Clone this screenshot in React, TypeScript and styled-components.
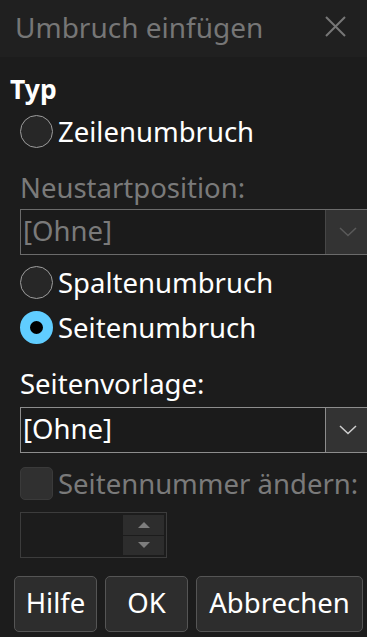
import React from "react";
import styled, { createGlobalStyle } from "styled-components";

const Global = createGlobalStyle`
  html, body {
    margin: 0;
    padding: 0;
    background: #1c1c1c;
    overflow: hidden;
  }
  * { box-sizing: border-box; }
`;

const Window = styled.div`
  width: 367px;
  height: 637px;
  background: #1c1c1c;
  font-family: "Noto Sans", "Open Sans", sans-serif;
  overflow: hidden;
  display: flex;
  flex-direction: column;
`;

const TitleBar = styled.div`
  height: 57px;
  background: #202020;
  display: flex;
  align-items: center;
  justify-content: space-between;
  padding: 0 21px 4px 15px;
  flex-shrink: 0;
`;

const Title = styled.span`
  color: #767676;
  font-size: 28px;
`;

const Body = styled.div`
  display: flex;
  flex-direction: column;
  padding-left: 20px;
`;

const Heading = styled.div`
  margin: 15px 0 0 -10px;
  height: 34px;
  display: flex;
  align-items: center;
  color: #fff;
  font-size: 26.5px;
  font-weight: 700;
`;

const Row = styled.div<{ $top: number; $disabled?: boolean }>`
  margin-top: ${(p) => p.$top}px;
  height: 34px;
  display: flex;
  align-items: center;
  gap: 5px;
  font-size: 27.5px;
  color: ${(p) => (p.$disabled ? "#7a7a7a" : "#ffffff")};
`;

const Radio = styled.span<{ $checked?: boolean }>`
  width: 33px;
  height: 33px;
  border-radius: 50%;
  flex-shrink: 0;
  background: ${(p) => (p.$checked ? "#000" : "#272727")};
  border: ${(p) => (p.$checked ? "10px solid #60cdff" : "1.5px solid #9d9d9d")};
`;

const Check = styled.span`
  width: 33px;
  height: 33px;
  border-radius: 5px;
  flex-shrink: 0;
  background: #303030;
  border: 1px solid #3a3a3a;
`;

const FieldLabel = styled.div<{ $top: number; $disabled?: boolean }>`
  margin-top: ${(p) => p.$top}px;
  height: 34px;
  display: flex;
  align-items: center;
  font-size: 27.5px;
  color: ${(p) => (p.$disabled ? "#7a7a7a" : "#ffffff")};
`;

const Select = styled.div<{ $top: number; $disabled?: boolean }>`
  margin-top: ${(p) => p.$top}px;
  width: 380px;
  height: 46px;
  display: flex;
  border: 1px solid ${(p) => (p.$disabled ? "#6b6b6b" : "#8d8d8d")};
  background: #1b1b1b;
  color: ${(p) => (p.$disabled ? "#7a7a7a" : "#ffffff")};
  font-size: 27.5px;
`;

const SelectValue = styled.div`
  flex: 1;
  display: flex;
  align-items: center;
  padding-left: 2px;
  padding-bottom: 3px;
`;

const SelectButton = styled.div<{ $disabled?: boolean }>`
  width: 74px;
  background: #333333;
  border-left: 1px solid ${(p) => (p.$disabled ? "#474747" : "#8d8d8d")};
  display: flex;
  align-items: center;
  padding-left: 12px;
`;

const Spin = styled.div`
  margin-top: 12px;
  width: 147px;
  height: 46px;
  border: 1px solid #3c3c3c;
  display: flex;
  justify-content: flex-end;
  padding: 2px;
`;

const SpinButtons = styled.div`
  width: 41px;
  display: flex;
  flex-direction: column;
  gap: 1px;
`;

const SpinButton = styled.div`
  flex: 1;
  background: #2d2d2d;
  display: flex;
  align-items: center;
  justify-content: center;
`;

const Buttons = styled.div`
  margin-top: 18px;
  margin-left: -6px;
  display: flex;
  gap: 8px;
`;

const Button = styled.button<{ $w: number }>`
  width: ${(p) => p.$w}px;
  height: 56px;
  background: #2d2d2d;
  border: 1px solid #555;
  border-radius: 5px;
  color: #fff;
  font-family: inherit;
  font-size: 27.5px;
  padding: 0 0 4px;
  white-space: nowrap;
`;

const Chevron = ({ color }: { color: string }) => (
  <svg width="20" height="12" viewBox="0 0 20 12">
    <path d="M2 2 L10 9.5 L18 2" fill="none" stroke={color} strokeWidth="1.5" />
  </svg>
);

const Tri = ({ up }: { up?: boolean }) => (
  <svg width="14" height="8" viewBox="0 0 14 8">
    <path d={up ? "M1 7 L7 1 L13 7 Z" : "M1 1 L7 7 L13 1 Z"} fill="#7d7d7d" />
  </svg>
);

export default function App() {
  return (
    <Window>
      <Global />
      <TitleBar>
        <Title>Umbruch einfügen</Title>
        <svg width="21" height="21" viewBox="0 0 21 21">
          <path d="M1 1 L20 20 M20 1 L1 20" stroke="#777" strokeWidth="2" />
        </svg>
      </TitleBar>
      <Body>
        <Heading>Typ</Heading>
        <Row $top={8}>
          <Radio />
          Zeilenumbruch
        </Row>
        <FieldLabel $top={22} $disabled>
          Neustartposition:
        </FieldLabel>
        <Select $top={5} $disabled>
          <SelectValue>[Ohne]</SelectValue>
          <SelectButton $disabled>
            <Chevron color="#5a5a5a" />
          </SelectButton>
        </Select>
        <Row $top={10}>
          <Radio />
          Spaltenumbruch
        </Row>
        <Row $top={11}>
          <Radio $checked />
          Seitenumbruch
        </Row>
        <FieldLabel $top={22}>Seitenvorlage:</FieldLabel>
        <Select $top={7}>
          <SelectValue>[Ohne]</SelectValue>
          <SelectButton>
            <Chevron color="#cfcfcf" />
          </SelectButton>
        </Select>
        <Row $top={13} $disabled>
          <Check />
          Seitennummer ändern:
        </Row>
        <Spin>
          <SpinButtons>
            <SpinButton>
              <Tri up />
            </SpinButton>
            <SpinButton>
              <Tri />
            </SpinButton>
          </SpinButtons>
        </Spin>
        <Buttons>
          <Button $w={83}>Hilfe</Button>
          <Button $w={83}>OK</Button>
          <Button $w={167}>Abbrechen</Button>
        </Buttons>
      </Body>
    </Window>
  );
}
